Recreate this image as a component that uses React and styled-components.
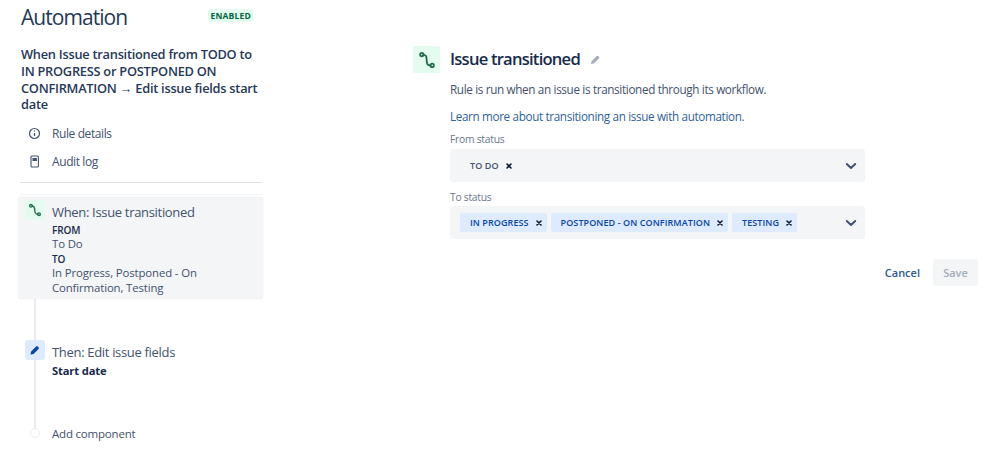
import React from 'react';
import styled, { createGlobalStyle } from 'styled-components';

const Global = createGlobalStyle`
  html, body { margin: 0; padding: 0; background: #fff; }
  body { font-family: "Open Sans", "Noto Sans", sans-serif; color: #172b4d; }
`;

const Page = styled.div`
  width: 999px; height: 466px; display: flex; overflow: hidden;
`;
const Sidebar = styled.aside`
  width: 245px; margin-left: 18px; display: flex; flex-direction: column; flex: none;
`;
const TitleRow = styled.div`
  display: flex; align-items: center; justify-content: space-between;
  padding: 0 10px 0 3px; height: 34px; margin-bottom: 1px;
`;
const Title = styled.h1`
  margin: 0; font-size: 21px; line-height: 26px; font-weight: 500; color: #253858; letter-spacing: -.95px;
`;
const Badge = styled.span`
  font-size: 8.5px; line-height: 13px; font-weight: 700; padding: 0 2px; letter-spacing: .2px;
  color: #006644; background: #e3fcef; border-radius: 3px; margin-bottom: 4px;
`;
const RuleName = styled.h2`
  margin: 11px 0 0; padding-left: 3px; font-size: 12.8px; line-height: 16.8px; font-weight: 600; color: #253858; letter-spacing: -.25px;
`;
const NavList = styled.nav`
  display: flex; flex-direction: column; margin-top: 6px;
`;
const NavItem = styled.div`
  height: 28px; display: flex; align-items: center; gap: 11px; padding-left: 10px;
  font-size: 12px; color: #42526e; letter-spacing: -.4px;
`;
const NavIcon = styled.svg`
  width: 13px; height: 13px; flex: none; color: #42526e;
`;
const Divider = styled.div`
  height: 1px; background: #dfe1e6; margin: 7px 1px 0 2px;
`;
const FaintRule = styled.div`
  height: 1px; background: #f4f5f7; margin: 11px 1px 2px 2px;
`;
const Steps = styled.div`
  position: relative; display: flex; flex-direction: column;
`;
const Rail = styled.div`
  position: absolute; left: 16px; top: 20px; height: 212px; width: 2px; background: #ebecf0;
`;
const Step = styled.div`
  position: relative; display: flex; gap: 7px; padding: 3px 6px 0 7px; border-radius: 4px;
  background: ${p => (p.$active ? '#f4f5f7' : 'transparent')};
  min-height: ${p => p.$h}px;
  box-sizing: border-box;
  box-shadow: ${p => (p.$active ? '0 0 1px rgba(9,30,66,.2)' : 'none')};
`;
const StepIcon = styled.div`
  width: 20px; height: 20px; border-radius: 3px; flex: none; display: flex; align-items: center; justify-content: center;
  background: ${p => p.$bg};
`;
const StepBody = styled.div`
  display: flex; flex-direction: column; min-width: 0;
`;
const StepTitle = styled.div`
  font-size: 13px; line-height: 22px; margin-top: 1px; color: #42526e; letter-spacing: -.32px;
`;
const Key = styled.div`
  font-size: 10px; line-height: 14.3px; font-weight: 600; color: #172b4d; letter-spacing: -.1px;
`;
const Val = styled.div`
  font-size: 11.4px; line-height: 14.7px; color: #42526e; letter-spacing: -.13px;
`;
const Bold = styled.div`
  font-size: 11.2px; line-height: 16px; font-weight: 700; color: #172b4d; letter-spacing: -.15px;
`;
const Gap = styled.div`
  height: ${p => p.$h}px;
`;
const AddRow = styled.div`
  position: relative; display: flex; align-items: center; gap: 12px; padding-left: 12px; height: 20px;
  font-size: 11.5px; color: #42526e; letter-spacing: -.2px;
`;
const Dot = styled.span`
  width: 10px; height: 10px; border-radius: 50%; background: #fff; border: 1px solid #ebecf0; box-sizing: border-box; flex: none;
`;
const Main = styled.main`
  margin-left: 150px; width: 565px; padding-top: 46px; flex: none; display: flex; flex-direction: column;
`;
const HeadRow = styled.div`
  display: flex; align-items: center; gap: 10px; height: 27px;
`;
const HeadIcon = styled.div`
  width: 27px; height: 27px; background: #e3fcef; border-radius: 2px; display: flex; align-items: center; justify-content: center; flex: none;
`;
const Heading = styled.h2`
  margin: -2px 0 0; font-size: 16.6px; line-height: 27px; font-weight: 600; color: #172b4d; letter-spacing: -.78px;
`;
const Content = styled.div`
  padding-left: 37px; display: flex; flex-direction: column;
`;
const Text = styled.p`
  margin: 8px 0 0; font-size: 11.7px; line-height: 16px; color: #42526e; letter-spacing: -.34px;
`;
const LinkText = styled.a`
  margin-top: 11px; font-size: 11.7px; line-height: 16px; color: #2f5f9e; letter-spacing: -.35px;
`;
const Label = styled.label`
  font-size: 10.3px; line-height: 13px; color: #6b778c; margin-top: 9px; letter-spacing: -.25px;
`;
const Select = styled.div`
  margin-top: ${p => p.$mt}px; width: 415px; height: 33px; background: #f4f5f7; border-radius: 3px;
  display: flex; align-items: center; padding: 0 7px 0 10px; box-sizing: border-box; gap: 4px;
`;
const Tag = styled.span`
  display: flex; align-items: center; height: 19px; border-radius: 2px; padding: 0 5px 0 10px; gap: 7px;
  font-size: 9px; font-weight: 600; white-space: nowrap; letter-spacing: .08px;
  background: ${p => (p.$plain ? 'transparent' : '#deebff')};
  color: ${p => (p.$plain ? '#42526e' : '#0747a6')};
`;
const TagX = styled.svg`
  width: 6px; height: 6px; flex: none; color: #0b1a33;
`;
const Chevron = styled.svg`
  width: 14px; height: 14px; margin-left: auto; color: #42526e; flex: none;
`;
const Actions = styled.div`
  width: 528px; margin-top: 20px; display: flex; justify-content: flex-end; align-items: center; gap: 13px;
`;
const Cancel = styled.button`
  border: 0; background: none; padding: 0; font: 600 11px "Open Sans", sans-serif; color: #2c5a94;
`;
const Save = styled.button`
  border: 0; width: 45px; height: 27px; border-radius: 3px; background: #f4f5f7; color: #a5adba;
  font: 600 11px "Open Sans", sans-serif; padding: 0;
`;

const TransitionIcon = ({ size }) => (
  <svg width={size} height={size} viewBox="0 0 16 16" fill="none" stroke="#216e4e" strokeWidth="1.6" strokeLinecap="round">
    <circle cx="3.4" cy="3.2" r="1.5" />
    <circle cx="12.6" cy="12.8" r="1.5" />
    <path d="M4.9 3.4C7.4 3.6 7.6 5 7.7 8c.1 3.6 .6 4.7 3.4 4.8" />
  </svg>
);

const X = () => (
  <TagX viewBox="0 0 6 6">
    <path d="M1 1l4 4M5 1L1 5" stroke="currentColor" strokeWidth="1.6" strokeLinecap="round" />
  </TagX>
);

const Down = () => (
  <Chevron viewBox="0 0 14 14">
    <path d="M2.8 5l4.2 4 4.2-4" fill="none" stroke="currentColor" strokeWidth="2" strokeLinecap="round" strokeLinejoin="round" />
  </Chevron>
);

export default function App() {
  return (
    <Page>
      <Global />
      <Sidebar>
        <TitleRow>
          <Title>Automation</Title>
          <Badge>ENABLED</Badge>
        </TitleRow>
        <RuleName>When Issue transitioned from TODO to IN PROGRESS or POSTPONED ON CONFIRMATION → Edit issue fields start date</RuleName>
        <NavList>
          <NavItem>
            <NavIcon viewBox="0 0 13 13">
              <circle cx="6.5" cy="6.5" r="5" fill="none" stroke="currentColor" strokeWidth="1.2" />
              <path d="M6.5 6v3M6.5 3.6v1" stroke="currentColor" strokeWidth="1.3" />
            </NavIcon>
            Rule details
          </NavItem>
          <NavItem>
            <NavIcon viewBox="0 0 13 13">
              <rect x="3" y="1" width="7.4" height="11" rx="1" fill="none" stroke="currentColor" strokeWidth="1.1" />
              <path d="M4.5 3h4.4v3H4.5z" fill="currentColor" />
            </NavIcon>
            Audit log
          </NavItem>
        </NavList>
        <Divider />
        <FaintRule />
        <Steps>
          <Rail />
          <Step $active $h={102}>
            <StepIcon $bg="#e3fcef"><TransitionIcon size={14} /></StepIcon>
            <StepBody>
              <StepTitle>When: Issue transitioned</StepTitle>
              <Key>FROM</Key>
              <Val>To Do</Val>
              <Key>TO</Key>
              <Val>In Progress, Postponed - On Confirmation, Testing</Val>
            </StepBody>
          </Step>
          <Gap $h={38} />
          <Step $h={73}>
            <StepIcon $bg="#deebff">
              <svg width="12" height="12" viewBox="0 0 12 12">
                <path d="M1.5 10.5l.6-3 5-5a1.2 1.2 0 0 1 1.7 0l.7.7a1.2 1.2 0 0 1 0 1.7l-5 5z" fill="#0747a6" />
              </svg>
            </StepIcon>
            <StepBody>
              <StepTitle>Then: Edit issue fields</StepTitle>
              <Bold>Start date</Bold>
            </StepBody>
          </Step>
          <Gap $h={13} />
          <AddRow><Dot />Add component</AddRow>
        </Steps>
      </Sidebar>
      <Main>
        <HeadRow>
          <HeadIcon><TransitionIcon size={18} /></HeadIcon>
          <Heading>Issue transitioned</Heading>
          <svg width="11" height="11" viewBox="0 0 12 12">
            <path d="M1 11l.7-3.2 5.6-5.6a1.2 1.2 0 0 1 1.7 0l.8.8a1.2 1.2 0 0 1 0 1.7L4.2 10.3z" fill="#a5adba" />
          </svg>
        </HeadRow>
        <Content>
          <Text>Rule is run when an issue is transitioned through its workflow.</Text>
          <LinkText>Learn more about transitioning an issue with automation.</LinkText>
          <Label>From status</Label>
          <Select $mt={3}>
            <Tag $plain>TO DO<X /></Tag>
            <Down />
          </Select>
          <Label>To status</Label>
          <Select $mt={2}>
            <Tag>IN PROGRESS<X /></Tag>
            <Tag>POSTPONED - ON CONFIRMATION<X /></Tag>
            <Tag>TESTING<X /></Tag>
            <Down />
          </Select>
          <Actions>
            <Cancel>Cancel</Cancel>
            <Save>Save</Save>
          </Actions>
        </Content>
      </Main>
    </Page>
  );
}
